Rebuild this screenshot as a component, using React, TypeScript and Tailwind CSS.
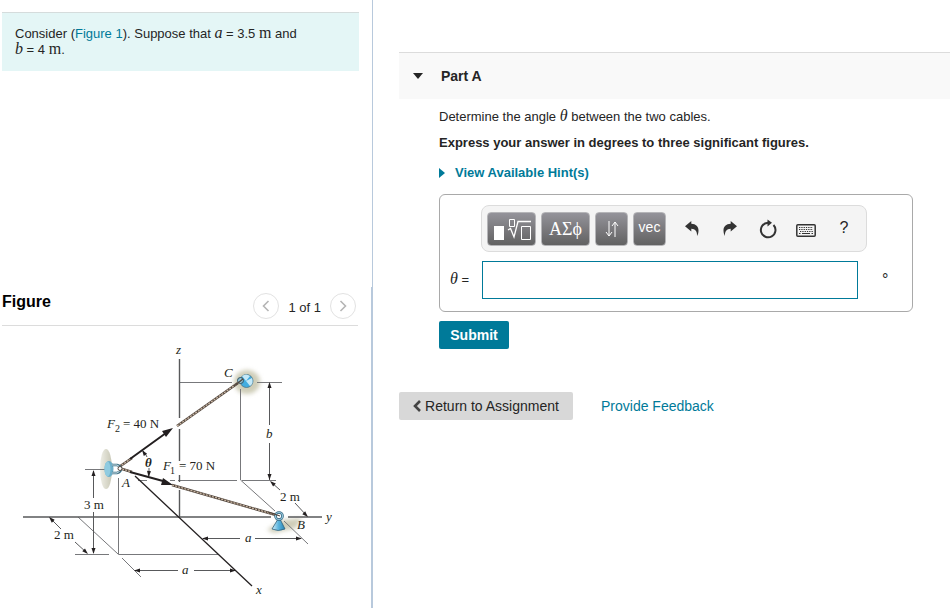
import React from "react";

const Head = ({ x, y, angle }: { x: number; y: number; angle: number }) => (
    <path d="M0 0 L-6 -2 L-6 2 Z" fill="#231f20" transform={`translate(${x} ${y}) rotate(${angle})`} />
);

const Rope = ({ d }: { d: string }) => (
    <>
        <path d={d} stroke="#54483f" strokeWidth="2.6" />
        <path d={d} stroke="#c9b6a3" strokeWidth="1.3" strokeDasharray="2 1.2" />
    </>
);

const CableDiagram = () => (
    <svg
        viewBox="0 326 371 282"
        className="block w-full"
        fill="none"
        role="img"
        aria-label="Two cables from A to B and C"
    >
        <defs>
            <filter id="soft" x="-40%" y="-40%" width="180%" height="180%">
                <feGaussianBlur stdDeviation="2" />
            </filter>
            <linearGradient id="cone" x1="0" x2="1" y1="0" y2="0">
                <stop offset="0" stopColor="#d5effa" />
                <stop offset="0.5" stopColor="#5bb4dd" />
                <stop offset="1" stopColor="#2a84b5" />
            </linearGradient>
            <linearGradient id="wall" x1="0" x2="1" y1="0" y2="0">
                <stop offset="0" stopColor="#eeeee6" />
                <stop offset="1" stopColor="#c9c8b6" />
            </linearGradient>
        </defs>

        {/* shadows behind the supports */}
        <ellipse cx="106" cy="469" rx="6" ry="20" fill="url(#wall)" />
        <ellipse cx="247" cy="382" rx="13" ry="12" fill="#cfcdb8" filter="url(#soft)" />
        <path d="M267 530 L282 520 L302 518 L296 528 L274 533 Z" fill="#cfcdb8" filter="url(#soft)" />

        {/* construction lines */}
        <g stroke="#77787b" strokeWidth="1">
            <path d="M179.5 382.5H232M257 382.5H282" />
            <path d="M240.5 389V480L275 511M284 521L308 544" />
            <path d="M138 480.5H147M170 480.5H175M178 480.5H237M242 480.5H276" />
            <path d="M118.5 478V554.5H218M75 554.5H109M85 469.5H107" />
            <path d="M78 517L118 554M122 558L141 577" />
        </g>

        {/* axes */}
        <g stroke="#58595b" strokeWidth="1.4">
            <path d="M179.5 359V418M179.5 429V461M179.5 475V482M179.5 490V517" />
            <path d="M23 517H271M288 517H322" />
        </g>
        <path d="M135 476L252 586" stroke="#231f20" strokeWidth="1.3" />

        {/* dimension lines */}
        <g stroke="#58595b" strokeWidth="1">
            <path d="M269.5 384V425M269.5 443V480" />
            <path d="M271 482L280 490M295 503L307 516" />
            <path d="M93.5 471V498M93.5 512V553" />
            <path d="M50 518L61 529M75 542L87 553" />
            <path d="M135 570.5H178M194 570.5H235" />
            <path d="M203 538.5H240M255 538.5H301" />
            <path d="M143 451Q146 454 147 457M149 468V476" />
        </g>
        <Head x={269.5} y={382} angle={-90} />
        <Head x={269.5} y={480} angle={90} />
        <Head x={270} y={481} angle={-138} />
        <Head x={308} y={517} angle={45} />
        <Head x={93.5} y={470} angle={-90} />
        <Head x={93.5} y={554} angle={90} />
        <Head x={49} y={517} angle={-135} />
        <Head x={88} y={554} angle={43} />
        <Head x={134} y={570.5} angle={180} />
        <Head x={236} y={570.5} angle={0} />
        <Head x={202} y={538.5} angle={180} />
        <Head x={302} y={538.5} angle={0} />
        <Head x={142} y={450} angle={-125} />
        <Head x={148.5} y={477} angle={95} />

        {/* cables and forces */}
        <Rope d="M177 426L238 383" />
        <Rope d="M172 485L276 515" />
        <Rope d="M119 467L132 458" />
        <Rope d="M119 468L132 472" />
        <path d="M130 459L166 433M130 472L163 481" stroke="#231f20" strokeWidth="2" />
        <path d="M173 428L166 437L162 431Z M173 485L161 485L163 478Z" fill="#231f20" />

        {/* support A */}
        <ellipse cx="109" cy="469" rx="4.5" ry="8" fill="#6cafc9" />
        <ellipse cx="107.5" cy="469" rx="3" ry="7.5" fill="#8fcbe0" />
        <path d="M112 465H117Q121 466 121 469Q121 472 117 473H112" stroke="#3a6c80" strokeWidth="2.4" />
        <path d="M112 465H117Q120 466 120 469Q120 472 117 473H112" stroke="#d2e6ee" strokeWidth="1" />
        <circle cx="120" cy="468.5" r="2" stroke="#54483f" fill="#fff" />

        {/* support C */}
        <circle cx="246.5" cy="381" r="6.5" fill="#43ade0" stroke="#4b7386" strokeWidth="0.8" />
        <path d="M246 381L242 376Q246 373 250 376ZM246 381L252 378Q254 383 250 386Z" fill="#c5e9f8" />
        <circle cx="240.5" cy="380.5" r="3" fill="#8fc3d8" stroke="#33515f" />
        <path d="M234 386L243 379" stroke="#54483f" strokeWidth="1.5" />

        {/* support B */}
        <path d="M278 519L272 529Q278 532 285 529L280 519Z" fill="url(#cone)" stroke="#31617a" strokeWidth="0.8" />
        <circle cx="279" cy="516" r="3.5" fill="#fff" stroke="#31617a" strokeWidth="2.6" />
        <circle cx="279" cy="516" r="3.5" stroke="#94c7dc" strokeWidth="1.2" />
        <path d="M268 512L280 516" stroke="#54483f" strokeWidth="1.2" />

        <g fill="#231f20" className="font-['Liberation_Serif',serif] text-[13px]">
            <g className="italic">
                <text x="176" y="354">z</text>
                <text x="224" y="377">C</text>
                <text x="266" y="438">b</text>
                <text x="122" y="487">A</text>
                <text x="297" y="529">B</text>
                <text x="326" y="521">y</text>
                <text x="256" y="594">x</text>
                <text x="245" y="542">a</text>
                <text x="182" y="574">a</text>
                <text x="145" y="467" className="font-bold">θ</text>
                <text x="107" y="428">F</text>
                <text x="163" y="470">F</text>
            </g>
            <text x="115" y="432" className="text-[10px]">2</text>
            <text x="170" y="474" className="text-[10px]">1</text>
            <text x="123" y="428">= 40 N</text>
            <text x="179" y="470">= 70 N</text>
            <text x="84" y="509">3 m</text>
            <text x="54" y="539">2 m</text>
            <text x="280" y="501">2 m</text>
        </g>
    </svg>
);

const App = () => {
    return (
        <div className="grid min-h-screen grid-cols-[373fr_577fr] bg-white font-['Liberation_Sans',Arial,sans-serif] text-[13px] leading-4 text-[#252525]">
            <aside className="flex flex-col">
                <div className="flex-1 border-r border-[#b8c9dc] pt-3 pr-[13px] pl-0.5">
                    <p className="border-t border-[#d5dcdc] bg-[#e4f6f6] px-[13px] pt-[13px] pb-[13px]">
                        Consider (
                        <a href="#figure" className="text-[#007a99]">
                            Figure 1
                        </a>
                        ). Suppose that <i className="font-['Liberation_Serif',serif] text-base leading-3">a</i> = 3.5{" "}
                        <span className="font-['Liberation_Serif',serif] text-base leading-3">m</span> and
                        <br />
                        <i className="font-['Liberation_Serif',serif] text-base leading-3">b</i> = 4{" "}
                        <span className="font-['Liberation_Serif',serif] text-base leading-3">m</span>.
                    </p>
                </div>
                <section id="figure" className="border-r-2 border-[#b8c9dc]">
                    <div className="mr-[13px] ml-0.5 flex h-[39px] items-center border-b border-[#dcdcdc] pr-0.5">
                        <h2 className="flex-1 pb-2 text-base font-bold text-black">Figure</h2>
                        <button
                            type="button"
                            aria-label="Previous figure"
                            className="flex size-[26px] items-center justify-center rounded-full border border-[#e2e2e2]"
                        >
                            <svg viewBox="0 0 8 12" className="h-3 w-2" fill="none" stroke="#b5b5b5" strokeWidth="1.6">
                                <path d="M6.5 1L1.5 6L6.5 11" />
                            </svg>
                        </button>
                        <span className="px-[9px] pt-1">1 of 1</span>
                        <button
                            type="button"
                            aria-label="Next figure"
                            className="flex size-[26px] items-center justify-center rounded-full border border-[#e2e2e2]"
                        >
                            <svg viewBox="0 0 8 12" className="h-3 w-2" fill="none" stroke="#b5b5b5" strokeWidth="1.6">
                                <path d="M1.5 1L6.5 6L1.5 11" />
                            </svg>
                        </button>
                    </div>
                    <CableDiagram />
                </section>
            </aside>

            <main className="pt-[52px] pl-[26px]">
                <button
                    type="button"
                    className="flex h-[47px] w-full items-center gap-[18px] border-t border-[#dcdcdc] bg-[#f9f9f9] pl-3.5 text-sm font-bold"
                >
                    <svg viewBox="0 0 10 6" className="h-1.5 w-2.5" fill="#252525">
                        <path d="M0 0H10L5 6Z" />
                    </svg>
                    Part A
                </button>

                <div className="pt-2.5 pr-[37px] pl-10">
                    <p>
                        Determine the angle <i className="font-['Liberation_Serif',serif] text-base leading-3">θ</i>{" "}
                        between the two cables.
                    </p>
                    <p className="pt-2.5 font-bold">Express your answer in degrees to three significant figures.</p>
                    <button type="button" className="mt-3.5 flex items-center gap-2.5 font-bold text-[#007a99]">
                        <svg viewBox="0 0 6 10" className="h-2.5 w-1.5" fill="#007a99">
                            <path d="M0 0L6 5L0 10Z" />
                        </svg>
                        View Available Hint(s)
                    </button>

                    <form>
                        <div className="mt-[13px] rounded-md border border-[#a9a9a9] pt-2.5 pb-3">
                            <div className="mr-[45px] ml-[41px] flex h-[47px] items-center rounded-lg border border-[#dcdcdc] bg-[#f4f4f4] pl-[5px]">
                                <div className="flex gap-[5px] pr-[7px] text-white">
                                    <button
                                        type="button"
                                        aria-label="Templates"
                                        className="flex h-[34px] w-[49px] items-center justify-center rounded border border-[#b5b5b8] bg-linear-to-b from-[#94939a] to-[#626262]"
                                    >
                                        <svg viewBox="0 0 38 22" className="h-[22px] w-[38px]" fill="none" stroke="#fff">
                                            <path d="M1 8H11V22H1Z" fill="#fff" stroke="none" />
                                            <path d="M16.5 1.5H21.5V8.5H16.5Z" />
                                            <path d="M15 12L17.5 10.5L21 19L25 3.5H38" strokeWidth="1.3" />
                                            <path d="M28.5 8.5H37.5V21.5H28.5Z" />
                                        </svg>
                                    </button>
                                    <button
                                        type="button"
                                        className="h-[34px] w-[49px] rounded border border-[#b5b5b8] bg-linear-to-b from-[#94939a] to-[#626262] font-['Liberation_Serif',serif] text-lg leading-4"
                                    >
                                        ΑΣϕ
                                    </button>
                                    <button
                                        type="button"
                                        aria-label="Subscript and superscript"
                                        className="flex h-[34px] w-[33px] items-center justify-center rounded border border-[#b5b5b8] bg-linear-to-b from-[#94939a] to-[#626262]"
                                    >
                                        <svg viewBox="0 0 14 16" className="h-4 w-3.5" fill="none" stroke="#fff">
                                            <path d="M4 0V15M1 11L4 15L7 11M10 16V1M7 5L10 1L13 5" />
                                        </svg>
                                    </button>
                                    <button
                                        type="button"
                                        className="h-[34px] w-[33px] rounded border border-[#b5b5b8] bg-linear-to-b from-[#94939a] to-[#626262] pb-1 text-sm leading-4"
                                    >
                                        vec
                                    </button>
                                </div>
                                <button type="button" aria-label="Undo" className="flex w-[38px] justify-center">
                                    <svg viewBox="0 0 14 15" className="h-[15px] w-3.5" fill="#333">
                                        <path d="M0 5.3L6.3 0V2.7C11 2.9 13.5 5.5 13.5 9.5C13.5 11.5 13 13.5 12 15C12.3 10.5 10.5 8 6.3 7.8V10.5Z" />
                                    </svg>
                                </button>
                                <button type="button" aria-label="Redo" className="flex w-[38px] justify-center">
                                    <svg viewBox="0 0 14 15" className="h-[15px] w-3.5" fill="#333">
                                        <path d="M14 5.3L7.7 0V2.7C3 2.9 0.5 5.5 0.5 9.5C0.5 11.5 1 13.5 2 15C1.7 10.5 3.5 8 7.7 7.8V10.5Z" />
                                    </svg>
                                </button>
                                <button type="button" aria-label="Reset" className="flex w-[38px] justify-center">
                                    <svg viewBox="0 0 18 20" className="h-5 w-[18px]" fill="none">
                                        <path d="M14.5 6A7.3 7.3 0 1 1 9 3.7" stroke="#333" strokeWidth="2" />
                                        <path d="M8.500 0.5L13 3.8L8.5 7.5Z" fill="#333" />
                                    </svg>
                                </button>
                                <button type="button" aria-label="Keyboard" className="flex w-[38px] justify-center pt-1">
                                    <svg viewBox="0 0 20 13" className="h-[13px] w-5" fill="none" stroke="#333">
                                        <rect x="0.8" y="0.8" width="18.4" height="11.4" rx="1" strokeWidth="1.5" />
                                        <path d="M3 3.5H17M3 5.5H17M4 7.5H17" strokeDasharray="1.3 1" />
                                        <path d="M3 9.5H4.5M6 9.5H14M15.5 9.5H17" strokeWidth="1.2" />
                                    </svg>
                                </button>
                                <button type="button" aria-label="Help" className="w-[38px] pb-0.5 text-center text-base leading-4">
                                    ?
                                </button>
                            </div>
                            <div className="flex items-center pt-[9px]">
                                <label htmlFor="answer" className="w-[42px] pl-2.5">
                                    <i className="font-['Liberation_Serif',serif] text-base leading-3">θ</i> =
                                </label>
                                <input
                                    id="answer"
                                    type="text"
                                    className="h-[38px] min-w-0 flex-1 border border-[#007a99] bg-white px-2 outline-none"
                                />
                                <span className="w-[54px] pl-6 text-base leading-4">°</span>
                            </div>
                        </div>
                        <button
                            type="submit"
                            className="mt-[9px] h-7 w-[70px] rounded-xs bg-[#007a99] text-sm font-bold text-white"
                        >
                            Submit
                        </button>
                    </form>
                </div>

                <div className="flex items-center gap-7 pt-[43px] text-sm">
                    <a
                        href="#assignment"
                        className="flex h-7 w-[174px] items-center justify-center gap-1 rounded-xs bg-[#d8d8d8]"
                    >
                        <svg viewBox="0 0 8 12" className="h-3 w-2" fill="none" stroke="#444" strokeWidth="2.6">
                            <path d="M7 1L2 6L7 11" />
                        </svg>
                        Return to Assignment
                    </a>
                    <a href="#feedback" className="text-[#007a99]">
                        Provide Feedback
                    </a>
                </div>
            </main>
        </div>
    );
};

export default App;
